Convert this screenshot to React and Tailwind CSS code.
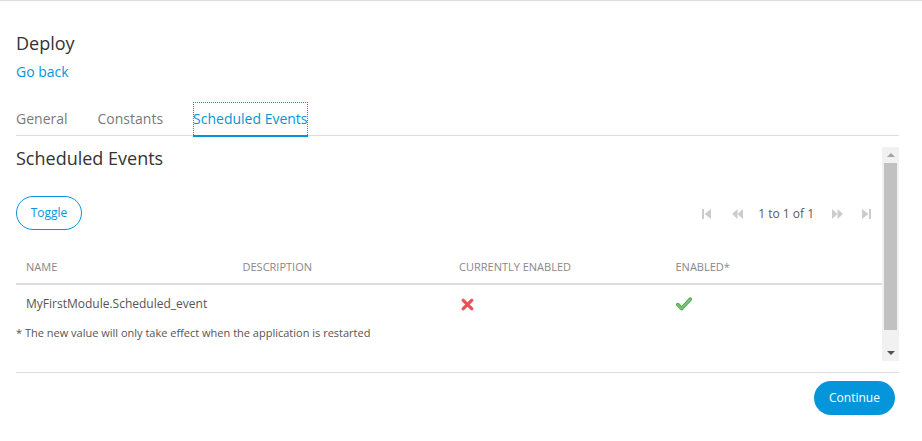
import React from "react";

function FirstIcon() {
  return (
    <svg width="9" height="10" viewBox="0 0 9 10" className="block">
      <rect x="0" y="0" width="2" height="10" fill="#cccccc" />
      <polygon points="9,0 9,10 2.5,5" fill="#cccccc" />
    </svg>
  );
}
function LastIcon() {
  return (
    <svg width="9" height="10" viewBox="0 0 9 10" className="block">
      <rect x="7" y="0" width="2" height="10" fill="#cccccc" />
      <polygon points="0,0 0,10 6.5,5" fill="#cccccc" />
    </svg>
  );
}
function PrevIcon() {
  return (
    <svg width="11" height="10" viewBox="0 0 11 10" className="block">
      <polygon points="5.5,0 5.5,10 0,5" fill="#cccccc" />
      <polygon points="11,0 11,10 5.5,5" fill="#cccccc" />
    </svg>
  );
}
function NextIcon() {
  return (
    <svg width="11" height="10" viewBox="0 0 11 10" className="block">
      <polygon points="0,0 0,10 5.5,5" fill="#cccccc" />
      <polygon points="5.5,0 5.5,10 11,5" fill="#cccccc" />
    </svg>
  );
}

function RedX() {
  return (
    <svg width="13" height="13" viewBox="0 0 13 13" className="block">
      <path d="M2.2 2.2 L10.8 10.8 M10.8 2.2 L2.2 10.8" stroke="#f47077" strokeWidth="3.4" strokeLinecap="round" />
      <path d="M2.2 2.2 L10.8 10.8 M10.8 2.2 L2.2 10.8" stroke="#ec4b55" strokeWidth="2" strokeLinecap="round" />
    </svg>
  );
}

function GreenCheck() {
  return (
    <svg width="16" height="14" viewBox="0 0 16 14" className="block">
      <path d="M1.8 7.6 L5.6 11.6 L14.2 2.2" fill="none" stroke="#4f9e4f" strokeWidth="3.6" strokeLinecap="round" strokeLinejoin="round" />
      <path d="M1.8 7.6 L5.6 11.6 L14.2 2.2" fill="none" stroke="#79c579" strokeWidth="2" strokeLinecap="round" strokeLinejoin="round" />
    </svg>
  );
}

export default function App() {
  const font = { fontFamily: '"Open Sans", "Noto Sans", sans-serif' };
  return (
    <div className="w-[922px] h-[441px] bg-white overflow-hidden" style={font}>
      <div className="h-[1px] bg-[#dcdcdc]" />
      <div className="pl-[16px] pr-[23px]">
        <div className="mt-[30px] text-[18px] leading-[24px] text-[#333]">Deploy</div>
        <div className="mt-[7px] text-[14px] leading-[20px] text-[#0595db]">Go back</div>

        <div className="mt-[20px] flex border-b border-[#dddddd] h-[34px]">
          <div className="mr-[30px] pt-[7px] text-[14px] leading-[20px] text-[#7a7a7a]">General</div>
          <div className="mr-[30px] pt-[7px] text-[14px] leading-[20px] text-[#7a7a7a]">Constants</div>
          <div className="-mb-[1px] h-[35px] pt-[7px] text-[14px] leading-[20px] text-[#0595db] border-b-2 border-[#0595db] outline-1 outline-dotted -outline-offset-1 outline-[#0595db]">
            Scheduled Events
          </div>
        </div>

        <div className="mt-[11px] h-[215px] flex overflow-hidden">
          <div className="flex-1 min-w-0 h-[215px] overflow-hidden">
            <div className="text-[18px] leading-[22px] text-[#333]">Scheduled Events</div>

            <div className="mt-[27px] flex items-center justify-between h-[34px]">
              <div className="h-[34px] w-[66px] rounded-full border border-[#0595db] flex items-center justify-center text-[12px] text-[#0595db]">
                Toggle
              </div>
              <div className="flex items-center mr-[11px] mt-[1px]">
                <FirstIcon />
                <div className="ml-[21px]"><PrevIcon /></div>
                <div className="ml-[15px] text-[12px] leading-[16px] text-[#5a5a5a]">1 to 1 of 1</div>
                <div className="ml-[18px]"><NextIcon /></div>
                <div className="ml-[19px]"><LastIcon /></div>
              </div>
            </div>

            <div className="mt-[19px] border-b border-[#eeeeee] pb-[22px]">
              <div className="grid grid-cols-4 h-[36px] items-center border-b-2 border-[#dddddd] text-[11px] leading-[15px] text-[#888] uppercase">
                <div className="pl-[10px]">Name</div>
                <div className="pl-[10px]">Description</div>
                <div className="pl-[10px]">Currently enabled</div>
                <div className="pl-[10px]">Enabled*</div>
              </div>
              <div className="grid grid-cols-4 h-[38px] items-center text-[12px] leading-[18px] text-[#555]">
                <div className="pl-[10px] whitespace-nowrap">MyFirstModule.Scheduled_event</div>
                <div className="pl-[10px]"></div>
                <div className="pl-[12px]"><RedX /></div>
                <div className="pl-[10px]"><GreenCheck /></div>
              </div>
              <div className="mt-[2px] text-[11px] leading-[15px] text-[#555]">
                * The new value will only take effect when the application is restarted
              </div>
            </div>
          </div>

          <div className="w-[17px] h-[214px] bg-[#f1f1f1] flex flex-col items-center">
            <div className="h-[16px] flex items-center justify-center">
              <div className="w-0 h-0 border-l-[4px] border-r-[4px] border-b-[4px] border-l-transparent border-r-transparent border-b-[#a3a3a3]" />
            </div>
            <div className="w-[13px] h-[167px] bg-[#c1c1c1]" />
            <div className="flex-1" />
            <div className="h-[16px] flex items-center justify-center">
              <div className="w-0 h-0 border-l-[4px] border-r-[4px] border-t-[4px] border-l-transparent border-r-transparent border-t-[#505050]" />
            </div>
          </div>
        </div>

        <div className="mt-[10px] h-[1px] bg-[#dddddd]" />
        <div className="mt-[8px] flex justify-end pr-[4px]">
          <div className="h-[34px] w-[81px] rounded-full bg-[#0595db] flex items-center justify-center text-[12px] text-white">
            Continue
          </div>
        </div>
      </div>
    </div>
  );
}
